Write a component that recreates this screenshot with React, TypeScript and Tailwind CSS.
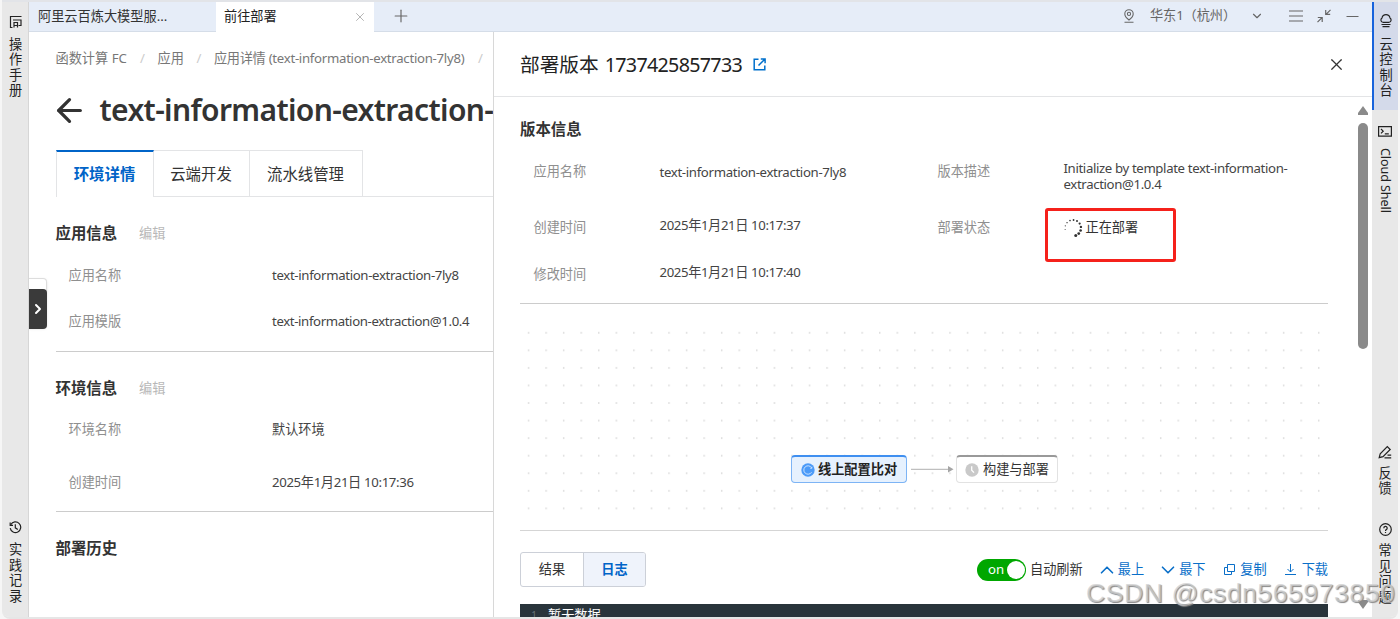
import type { ReactNode } from 'react';
import {
  ArrowLeft,
  ChevronDown,
  ChevronRight,
  ChevronUp,
  Minus,
  Plus,
  X,
} from 'lucide-react';

interface InfoRowProps {
  label: string;
  value: string;
  className: string;
}

function InfoRow({ label, value, className }: InfoRowProps) {
  return (
    <div className={`flex items-center pl-[13px] ${className}`}>
      <span className="w-[203.5px] shrink-0 tracking-normal text-[#8f8f8f]">{label}</span>
      <span className="text-[#444]">{value}</span>
    </div>
  );
}

function SectionTitle({ title, editable }: { title: string; editable?: boolean }) {
  return (
    <div className="mt-[18px] flex h-[38px] items-center">
      <h3 className="text-[15.4px] font-bold text-[#333]">{title}</h3>
      {editable && <span className="ml-[22px] text-[#b8b8b8]">编辑</span>}
    </div>
  );
}

function VerticalText({ children }: { children: string }) {
  return (
    <span className="flex flex-col items-center text-[13.2px] leading-[15.4px] text-[#222]">
      {children.split('').map((char, index) => (
        <span key={index}>{char}</span>
      ))}
    </span>
  );
}

function ActionLink({ icon, label, className }: { icon: ReactNode; label: string; className: string }) {
  return (
    <a className={`flex items-center text-[#0a6fc9] ${className}`}>
      {icon}
      <span>{label}</span>
    </a>
  );
}

function LeftRail() {
  return (
    <aside className="flex w-[27px] shrink-0 flex-col items-center border-r border-[#d6d6d6] bg-[#e8e8e8] pl-[1px]">
      <svg className="mt-[13px] h-[14px] w-[14px]" viewBox="0 0 14 14" fill="none" stroke="#222" strokeWidth="1.2">
        <path d="M12.5 1.5H1.5V12.5H3.5" />
        <path d="M4 5H12V10.5H9.5M5 12.5V7.5H8.5V12.500M5 10.500H8.500" />
      </svg>
      <div className="mt-[8px]">
        <VerticalText>操作手册</VerticalText>
      </div>
      <svg className="mt-auto h-[13px] w-[13px]" viewBox="0 0 13 13" fill="none" stroke="#222" strokeWidth="1.2">
        <path d="M1.8 3.6A5.3 5.3 0 1 1 1.2 7.2" />
        <path d="M1.2 1.6V4.4H4M6.3 3.3V6.8L8.8 8.4" />
      </svg>
      <div className="mt-[8px] mb-[13px]">
        <VerticalText>实践记录</VerticalText>
      </div>
    </aside>
  );
}

function RightRail() {
  return (
    <aside className="flex w-[26px] shrink-0 flex-col items-center bg-[#e8e8e8]">
      <div className="flex h-[108px] w-full flex-col items-center border-l-[2.5px] border-[#1763dc] bg-[#d4daea]">
        <svg className="mt-[12px] h-[14px] w-[14px]" viewBox="0 0 14 14" fill="none" stroke="#222" strokeWidth="1.2">
          <path d="M3.5 8.300A2.500 2.500 0 0 1 3 3.900A4.100 4.100 0 0 1 11 3.900A2.500 2.500 0 0 1 10.500 8.300" />
          <path d="M3.500 8.300H10.500M2.500 10.500H11.500M3.500 12.700H10.500" />
        </svg>
        <div className="mt-[9px]">
          <VerticalText>云控制台</VerticalText>
        </div>
      </div>
      <svg className="mt-[16px] h-[11px] w-[14px]" viewBox="0 0 14 11" fill="none" stroke="#222" strokeWidth="1.2">
        <path d="M0.6 0.6H13.4V10.2H0.6Z" />
        <path d="M3 3L5.2 5.2L3 7.4M6.8 7.8H10.8" />
      </svg>
      <span className="mt-[11px] text-[12.6px] leading-[16px] tracking-[-0.1px] whitespace-nowrap text-[#222] [writing-mode:vertical-rl]">
        Cloud Shell
      </span>
      <svg className="mt-auto h-[14px] w-[14px]" viewBox="0 0 14 14" fill="none" stroke="#222" strokeWidth="1.2">
        <path d="M1.2 12.6L2.2 8.8L9.3 1.6L12.2 4.5L5 11.6L1.2 12.6Z" />
        <path d="M6.5 12.8H13.2M9.5 10.2H13.2" />
      </svg>
      <div className="mt-[7px]">
        <VerticalText>反馈</VerticalText>
      </div>
      <svg className="mt-[27px] h-[13px] w-[13px]" viewBox="0 0 13 13" fill="none" stroke="#222" strokeWidth="1.2">
        <circle cx="6.5" cy="6.5" r="5.8" />
        <path d="M4.8 5.2A1.7 1.7 0 1 1 7.3 6.6Q6.5 7.1 6.5 8M6.5 9V10" />
      </svg>
      <div className="mt-[7px] mb-[12px]">
        <VerticalText>常见问题</VerticalText>
      </div>
    </aside>
  );
}

function TopBar() {
  return (
    <header className="flex h-[30px] shrink-0 items-center bg-[#e6edf8] text-[13.2px]">
      <div className="flex h-full w-[187px] items-center border-b border-[#d5dde8] pl-[9px] text-[#333]">
        阿里云百炼大模型服...
      </div>
      <div className="flex h-full w-[158px] items-center justify-between bg-white pr-[7px] pb-[1px] pl-[8px] text-[#222]">
        前往部署
        <X size={14} strokeWidth={1.5} color="#aaa" />
      </div>
      <div className="flex h-full grow items-center border-b border-[#d5dde8] pb-[1px] text-[#666]">
        <Plus className="ml-[17px]" size={20} strokeWidth={1.4} color="#666" />
        <svg className="ml-auto h-[14px] w-[12px]" viewBox="0 0 12 14" fill="none" stroke="#666" strokeWidth="1.1">
          <path d="M6 11C3.5 9 1.8 7.2 1.8 4.9A4.2 4.2 0 0 1 10.2 4.9C10.2 7.2 8.5 9 6 11Z" />
          <circle cx="6" cy="4.9" r="1.6" />
          <path d="M1.5 13.2H10.5" />
        </svg>
        <span className="ml-[15px] w-[88px] tracking-[-0.1px] whitespace-nowrap">华东1（杭州）</span>
        <ChevronDown className="ml-[12px]" size={14} strokeWidth={2} color="#666" />
        <svg className="ml-[25px] h-[12px] w-[14px]" viewBox="0 0 14 12" fill="none" stroke="#666" strokeWidth="1.2">
          <path d="M0 1H14M0 6H14M0 11H14" />
        </svg>
        <svg className="ml-[14px] h-[14px] w-[14px]" viewBox="0 0 14 14" fill="none" stroke="#666" strokeWidth="1.2">
          <path d="M13.5 0.8L9 5.3M8.7 1V5.4H13.2M0.5 13.2L5 8.7M0.8 8.5H5.2V13" />
        </svg>
        <Minus className="mr-[10px] ml-[12px]" size={19} strokeWidth={1.5} color="#666" />
      </div>
    </header>
  );
}

function AppDetail() {
  return (
    <section className="relative w-[465px] shrink-0 overflow-hidden border-r border-[#d8d8d8] bg-white pl-[26.5px] text-[13.2px]">
      <nav className="flex h-[54px] items-center whitespace-nowrap text-[#777]">
        <span className="w-[72px] shrink-0">函数计算 FC</span>
        <span className="w-[30px] shrink-0 text-center text-[#ccc]">/</span>
        <span className="shrink-0">应用</span>
        <span className="w-[30px] shrink-0 text-center text-[#ccc]">/</span>
        <span className="w-[251px] shrink-0 tracking-[-0.28px]">应用详情 (text-information-extraction-7ly8)</span>
        <span className="w-[31px] shrink-0 text-center text-[#ccc]">/</span>
      </nav>
      <div className="flex h-[48px] items-center">
        <ArrowLeft className="-ml-[5px] shrink-0" size={37} strokeWidth={2.1} color="#333" />
        <h1 className="ml-[12px] pb-[2px] text-[30px] font-semibold tracking-[-0.62px] whitespace-nowrap text-[#333]">
          text-information-extraction-7ly8
        </h1>
      </div>
      <div className="mt-[16px] flex h-[47px] text-[15.4px] text-[#333]">
        <div className="flex w-[98px] items-center justify-center border-t-2 border-r border-l border-t-[#0064c8] border-r-[#e3e4e6] border-l-[#e3e4e6] font-bold text-[#0064c8]">
          环境详情
        </div>
        <div className="flex w-[96px] items-center justify-center border-t border-r border-b border-[#e3e4e6] pt-[2px]">
          云端开发
        </div>
        <div className="flex w-[113px] items-center justify-center border-t border-r border-b border-[#e3e4e6] pt-[2px]">
          流水线管理
        </div>
        <div className="grow border-b border-[#e3e4e6]" />
      </div>

      <SectionTitle title="应用信息" editable />
      <InfoRow label="应用名称" value="text-information-extraction-7ly8" className="h-[46px] tracking-[-0.33px]" />
      <InfoRow label="应用模版" value="text-information-extraction@1.0.4" className="h-[46px] tracking-[-0.37px]" />
      <hr className="mt-[6px] border-[#ccc]" />
      <SectionTitle title="环境信息" editable />
      <InfoRow label="环境名称" value="默认环境" className="h-[44px]" />
      <InfoRow label="创建时间" value="2025年1月21日 10:17:36" className="h-[60px] pt-[1px] tracking-[-0.34px]" />
      <hr className="-mt-[1px] border-[#ccc]" />
      <SectionTitle title="部署历史" />

      {/* collapsed side panel handle */}
      <div className="absolute top-[246px] left-0 h-[50px] w-[18px] rounded-r-sm border border-l-0 border-[#ddd] bg-white shadow-sm" />
      <button className="absolute top-[257px] left-0 flex h-[40px] w-[18px] items-center justify-center rounded-r bg-[#3a3a3a]">
        <ChevronRight size={16} strokeWidth={3} color="#fff" />
      </button>
    </section>
  );
}

function Spinner() {
  const dots = Array.from({ length: 11 }, (_, i) => {
    const angle = ((170 + i * 26) * Math.PI) / 180;
    return { x: 9 + 8 * Math.cos(angle), y: 9 + 8 * Math.sin(angle), r: 0.5 + i * 0.1 };
  });
  return (
    <svg className="h-[18px] w-[18px] overflow-visible" viewBox="0 0 18 18" fill="#333">
      {dots.map((dot, i) => (
        <circle key={i} cx={dot.x} cy={dot.y} r={dot.r} />
      ))}
    </svg>
  );
}

function VersionInfo() {
  return (
    <div className="text-[13.2px] text-[#444]">
      <div className="flex h-[46px] items-center pl-[13.5px]">
        <span className="w-[126px] text-[#8f8f8f]">应用名称</span>
        <span className="w-[278px] pt-[1px] tracking-[-0.33px]">text-information-extraction-7ly8</span>
        <span className="w-[126px] text-[#8f8f8f]">版本描述</span>
        <span className="w-[240px] pt-[9px] leading-[15.4px] tracking-[-0.36px]">
          Initialize by template text-information-
          <br />
          extraction@1.0.4
        </span>
      </div>
      <div className="mt-[10px] flex h-[46px] items-center pl-[13.5px]">
        <span className="w-[126px] text-[#8f8f8f]">创建时间</span>
        <span className="w-[278px] pb-[5px] tracking-[-0.38px]">2025年1月21日 10:17:37</span>
        <span className="w-[126px] text-[#8f8f8f]">部署状态</span>
        <span className="relative flex items-center gap-[4px] text-[#333]">
          <Spinner />
          正在部署
          <span className="absolute -top-[10px] -left-[18.5px] h-[54px] w-[131px] rounded-[3px] border-[3.5px] border-[#f5211b]" />
        </span>
      </div>
      <div className="mt-[1px] flex h-[46px] items-center pl-[13.5px]">
        <span className="w-[126px] text-[#8f8f8f]">修改时间</span>
        <span className="pb-[5px] tracking-[-0.38px]">2025年1月21日 10:17:40</span>
      </div>
    </div>
  );
}

function PipelineCanvas() {
  return (
    <div className="relative h-[226px]">
      <svg className="absolute inset-0 h-full w-full">
        <defs>
          <pattern id="grid-dots" x="0" y="20" width="17.56" height="17.56" patternUnits="userSpaceOnUse">
            <circle cx="8.6" cy="8.7" r="0.75" fill="#c4c4c4" />
          </pattern>
        </defs>
        <rect x="0" y="20" width="808" height="190" fill="url(#grid-dots)" />
        <path d="M391 165.3H429" stroke="#b0b0b0" strokeWidth="1" />
        <path d="M428 162L433.5 165.3L428 168.6Z" fill="#a5a5a5" />
      </svg>
      <div className="absolute top-[151px] left-[271px] flex h-[28px] w-[116px] items-center rounded-[4px] border border-t-2 border-[#7db4f5] border-t-[#3f8ff0] bg-[#e6f1fe] pl-[9px] text-[13.2px] font-bold text-[#222]">
        <svg className="mr-[3px] h-[14px] w-[14px]" viewBox="0 0 14 14" fill="none">
          <circle cx="7" cy="7" r="6.7" fill="#4c9bf8" />
          <path
            d="M10.6 4.8A4.2 4.2 0 1 0 10.6 9.2M10.8 3.8V5.3H9.3"
            stroke="#d5e8ff"
            strokeWidth="0.9"
          />
        </svg>
        线上配置比对
      </div>
      <div className="absolute top-[151px] left-[436px] flex h-[28px] w-[102px] items-center rounded-[4px] border border-t-2 border-[#e2e2e2] border-t-[#999] bg-white pl-[8px] text-[13.2px] text-[#333]">
        <svg className="mr-[4px] h-[14px] w-[14px]" viewBox="0 0 14 14" fill="none">
          <circle cx="7" cy="7" r="6.7" fill="#c9c9c9" />
          <path d="M6.7 3.2V7.2L9 9.6" stroke="#fff" strokeWidth="1.3" />
        </svg>
        构建与部署
      </div>
    </div>
  );
}

function LogToolbar() {
  return (
    <div className="mt-[21px] flex h-[35px] items-center text-[13.2px]">
      <div className="flex h-full w-[126px] overflow-hidden rounded-[3px] border border-[#ccd0d8]">
        <div className="flex w-[62px] items-center justify-center text-[#333]">结果</div>
        <div className="flex grow items-center justify-center border-l border-[#ccd0d8] bg-[#eff3fb] font-bold text-[#0064c8]">
          日志
        </div>
      </div>
      <div className="ml-[331px] flex h-[22px] w-[49px] items-center justify-between rounded-full bg-[#00a700] pr-[1.5px] pl-[11px] text-white">
        <span>on</span>
        <span className="h-[18px] w-[18px] rounded-full bg-white" />
      </div>
      <span className="ml-[4px] text-[#333]">自动刷新</span>
      <ActionLink
        className="ml-[15px]"
        label="最上"
        icon={<ChevronUp className="-ml-[2px]" size={22} strokeWidth={1.8} />}
      />
      <ActionLink
        className="ml-[15px]"
        label="最下"
        icon={<ChevronDown className="-ml-[2px]" size={22} strokeWidth={1.8} />}
      />
      <ActionLink
        className="ml-auto"
        label="复制"
        icon={
          <svg className="mr-[5px] h-[11px] w-[11px]" viewBox="0 0 11 11" fill="none" stroke="currentColor">
            <path d="M3.5 0.5H10.5V7.5H3.5ZM3.5 3.5H0.5V10.5H7.5V7.5" />
          </svg>
        }
      />
      <ActionLink
        className="ml-[18px]"
        label="下载"
        icon={
          <svg className="mr-[6px] h-[11px] w-[11px]" viewBox="0 0 11 11" fill="none" stroke="currentColor">
            <path d="M5.5 0V8M2.5 5L5.5 8L8.5 5M0 10.5H11" />
          </svg>
        }
      />
    </div>
  );
}

function DeployDrawer() {
  return (
    <section className="flex grow flex-col bg-white">
      <div className="flex h-[65px] shrink-0 items-center border-b border-[#e3e4e6] pr-[26px] pl-[26px]">
        <h2 className="flex pt-[1px] text-[19.7px] text-[#222]">
          部署版本
          <span className="ml-[6px] tracking-[-0.7px]">1737425857733</span>
        </h2>
        <svg className="ml-[11px] h-[13px] w-[13px]" viewBox="0 0 13 13" fill="none" stroke="#0070cc" strokeWidth="1.5">
          <path d="M5.5 1.2H1.2V11.8H11.8V7.5M7.8 0.9H12.1V5.2M12 1L5.5 7.5" />
        </svg>
        <X className="ml-auto" size={19} strokeWidth={1.5} color="#333" />
      </div>
      <div className="flex min-h-0 grow">
        <div className="w-[834px] shrink-0 overflow-hidden pl-[26px]">
          <h3 className="mt-[14px] flex h-[38px] items-center text-[15.4px] font-bold text-[#333]">版本信息</h3>
          <VersionInfo />
          <hr className="mt-[5px] border-[#ccc]" />
          <PipelineCanvas />
          <hr className="border-[#d5d5d5]" />
          <LogToolbar />
          <div className="mt-[17px] flex h-[40px] bg-[#29343b] pt-[2px] text-[13.2px] text-white">
            <span className="w-[28px] text-center text-[10px] leading-[19px] text-[#68737a]">1</span>
            <span>暂无数据</span>
          </div>
        </div>
        <div className="ml-auto flex w-[10px] flex-col items-center">
          <svg className="mt-[9px] h-[9px] w-[10px]" viewBox="0 0 10 9" fill="#8a8a8a">
            <path d="M5 0L10 7V9H0V7Z" />
          </svg>
          <div className="mt-[8px] h-[226px] w-full rounded-full bg-[#8a8a8a]" />
          <svg className="mt-auto mb-[8px] h-[9px] w-[10px]" viewBox="0 0 10 9" fill="#8a8a8a">
            <path d="M5 9L10 2V0H0V2Z" />
          </svg>
        </div>
        <div className="w-[4px]" />
      </div>
    </section>
  );
}

export default function App() {
  return (
    <div className="relative h-[619px] w-[1400px] overflow-hidden bg-[#f6f6f6] px-[2px] font-['Noto_Sans','Noto_Sans_CJK_SC',sans-serif]">
      <div className="flex h-[619px] overflow-hidden rounded-b-lg border-t-2 border-b-2 border-t-[#e2e4e8] border-b-[#e6e6e6]">
        <LeftRail />
        <main className="flex w-[1343px] shrink-0 flex-col">
          <TopBar />
          <div className="flex min-h-0 grow">
            <AppDetail />
            <DeployDrawer />
          </div>
        </main>
        <RightRail />
      </div>
      <div className="pointer-events-none absolute top-[577px] left-[1086px] font-['Liberation_Sans',sans-serif] text-[26.5px] leading-[32px] tracking-[0.6px] whitespace-nowrap text-[#d0d0d0]/75 [text-shadow:1px_1px_1px_#888]">
        CSDN @csdn565973850
      </div>
    </div>
  );
}
